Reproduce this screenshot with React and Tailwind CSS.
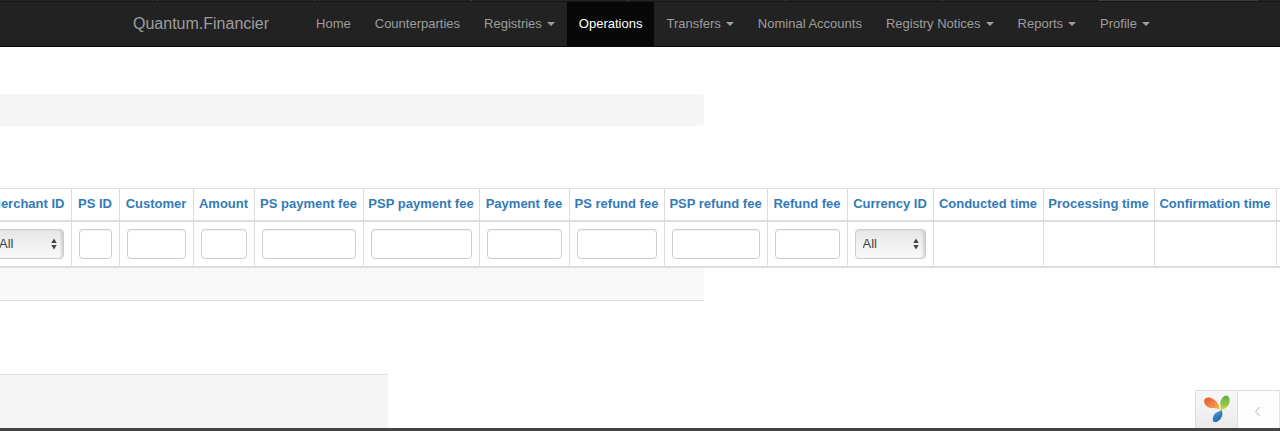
import clsx from 'clsx';
import { ChevronLeft } from 'lucide-react';

const navItems = [
  { label: 'Home' },
  { label: 'Counterparties' },
  { label: 'Registries', menu: true },
  { label: 'Operations', active: true },
  { label: 'Transfers', menu: true },
  { label: 'Nominal Accounts' },
  { label: 'Registry Notices', menu: true },
  { label: 'Reports', menu: true },
  { label: 'Profile', menu: true },
];

const columns = [
  { label: 'Merchant ID', filter: 'select', width: 'w-[87px]' },
  { label: 'PS ID', filter: 'text', width: 'w-[48px]' },
  { label: 'Customer', filter: 'text', width: 'w-[74px]' },
  { label: 'Amount', filter: 'text', width: 'w-[61px]' },
  { label: 'PS payment fee', filter: 'text', width: 'w-[109px]' },
  { label: 'PSP payment fee', filter: 'text', width: 'w-[116px]' },
  { label: 'Payment fee', filter: 'text', width: 'w-[90px]' },
  { label: 'PS refund fee', filter: 'text', width: 'w-[95px]' },
  { label: 'PSP refund fee', filter: 'text', width: 'w-[103px]' },
  { label: 'Refund fee', filter: 'text', width: 'w-[80px]' },
  { label: 'Currency ID', filter: 'select', width: 'w-[86px]' },
  { label: 'Conducted time', width: 'w-[110px]' },
  { label: 'Processing time', width: 'w-[111px]' },
  { label: 'Confirmation time', width: 'w-[122px]' },
];

export default function App() {
  return (
    <div className="overflow-hidden bg-white font-['Liberation_Sans',Arial,sans-serif] text-[13px] leading-[18px] text-[#333]">
      <TabStrip />
      <Navbar />

      <main>
        <div className="mt-[47px] h-8 w-[55%] rounded-r bg-[#f5f5f5]" />
        <div className="mt-[62px] -ml-4">
          <OperationsTable />
        </div>
        <div className="h-[33px] w-[55%] border-b border-[#ddd] bg-[#f9f9f9]" />
      </main>

      <div className="mt-[73px] flex items-end justify-between">
        <footer className="h-[54px] w-[388px] border-t border-[#ddd] bg-[#f5f5f5]" />
        <DebugToolbar />
      </div>
      <div className="h-[3px] bg-[#444446]" />
    </div>
  );
}

function TabStrip() {
  return (
    <div className="flex h-px bg-[#222426]">
      {[1, 2, 3, 4, 5, 6, 7].map((n) => (
        <div key={n} className={clsx('border-r border-[#4a4b4d]', n === 1 ? 'w-[158px]' : 'w-[157px]')} />
      ))}
      <div className="w-[158px] bg-[#3c3d3f]" />
    </div>
  );
}

function Navbar() {
  return (
    <header className="border-t border-b border-t-[#15171a] border-b-[#080808] bg-[#222]">
      <nav className="mx-auto flex h-11 w-[1014px] items-center text-[#9d9d9d]">
        <a href="#" className="mr-[35px] text-[16px]">Quantum.Financier</a>
        <ul className="flex h-full">
          {navItems.map(({ label, menu, active }) => (
            <li key={label}>
              <a
                href="#"
                className={clsx(
                  'flex h-full items-center gap-[5px] px-3 whitespace-nowrap',
                  active && 'bg-[#080808] text-white',
                )}
              >
                {label}
                {menu && <span className="border-x-4 border-t-4 border-x-transparent border-t-current" />}
              </a>
            </li>
          ))}
        </ul>
      </nav>
    </header>
  );
}

function OperationsTable() {
  return (
    <table className="w-[1400px] table-fixed border-collapse">
      <colgroup>
        {columns.map((col) => (
          <col key={col.label} className={col.width} />
        ))}
        <col />
      </colgroup>
      <thead>
        <tr className="h-8 border-t border-b-2 border-[#ddd]">
          {columns.map((col) => (
            <th key={col.label} className="border-r border-[#ddd] p-0 text-center font-bold whitespace-nowrap">
              <a href="#" className="text-[#337ab7]">{col.label}</a>
            </th>
          ))}
          <th />
        </tr>
      </thead>
      <tbody>
        <tr className="h-[46px] border-b-2 border-[#ddd]">
          {columns.map((col) => (
            <td key={col.label} className="border-r border-[#ddd] px-[7px] py-0">
              {col.filter === 'text' && (
                <input
                  type="text"
                  aria-label={col.label}
                  className="block h-[30px] w-full rounded border border-[#ccc] bg-white px-2 shadow-[inset_0_1px_1px_rgba(0,0,0,0.05)]"
                />
              )}
              {col.filter === 'select' && <FilterSelect label={col.label} />}
            </td>
          ))}
          <td />
        </tr>
      </tbody>
    </table>
  );
}

function FilterSelect({ label }) {
  return (
    <div className="relative">
      <select
        aria-label={label}
        className="block h-[30px] w-full appearance-none rounded border border-[#ccc] bg-linear-to-b from-[#e6e6e6] to-[#fafafa] px-[7px] text-[#444] shadow-[inset_-2px_0_2px_rgba(0,0,0,0.12)]"
      >
        <option>All</option>
      </select>
      <svg viewBox="0 0 6 12" className="pointer-events-none absolute top-[9px] right-[7px] h-3 w-1.5 fill-[#444]">
        <path d="M3 0.5 5.7 5H0.3zM3 11.5 0.3 7h5.4z" />
      </svg>
    </div>
  );
}

function DebugToolbar() {
  return (
    <div className="flex h-[38px] border-t border-l border-[#ddd]">
      <a href="#" aria-label="Debugger" className="flex w-[42px] items-center justify-center border-r border-[#ddd] bg-linear-to-b from-[#f7f7f7] to-[#ebebeb]">
        <YiiLogo />
      </a>
      <button type="button" aria-label="Toggle toolbar" className="flex w-[42px] items-center justify-center border-r border-[#e4e4e4] bg-[#fdfdfd] pt-1 pr-0.5 text-[#aaa]">
        <ChevronLeft size={17} strokeWidth={1.3} />
      </button>
    </div>
  );
}

function YiiLogo() {
  return (
    <svg viewBox="0 0 26 28" className="h-7 w-[26px]">
      <defs>
        <linearGradient id="leaf-orange" x1="0" y1="0" x2="1" y2="1">
          <stop offset="0" stopColor="#e2522b" />
          <stop offset="0.5" stopColor="#ee8148" />
          <stop offset="1" stopColor="#f7b733" />
        </linearGradient>
        <linearGradient id="leaf-green" x1="0" y1="0" x2="0" y2="1">
          <stop offset="0" stopColor="#5fb04a" />
          <stop offset="0.6" stopColor="#93c83e" />
          <stop offset="1" stopColor="#d8dc3b" />
        </linearGradient>
        <linearGradient id="leaf-blue" x1="0" y1="0" x2="0.6" y2="1">
          <stop offset="0" stopColor="#55a5dc" />
          <stop offset="1" stopColor="#1c63b0" />
        </linearGradient>
      </defs>
      <path fill="url(#leaf-orange)" d="M0.300 5C1 2.800 4 2 7 2.900C11.500 4.300 14.800 8.500 15.800 14.200C12.500 12.600 9 13.800 5 12.400C1.800 11.200-0.400 8 0.300 5Z" />
      <path fill="url(#leaf-green)" d="M22.600 0.600C25 1 26 4 25.500 7C24.800 11.300 21.300 14.200 16.500 15.200C17.400 12.500 15.800 10.500 16.400 7.300C17.100 3.700 20 0.200 22.600 0.600Z" />
      <path fill="url(#leaf-blue)" d="M17.300 14.800C19.200 18 18.500 22 16 24.500C14 26.500 11.300 27.700 9.800 26.800C8.300 25.800 8.500 22.400 9.900 20C11.500 17.200 14.800 17.500 17.300 14.800Z" />
    </svg>
  );
}
